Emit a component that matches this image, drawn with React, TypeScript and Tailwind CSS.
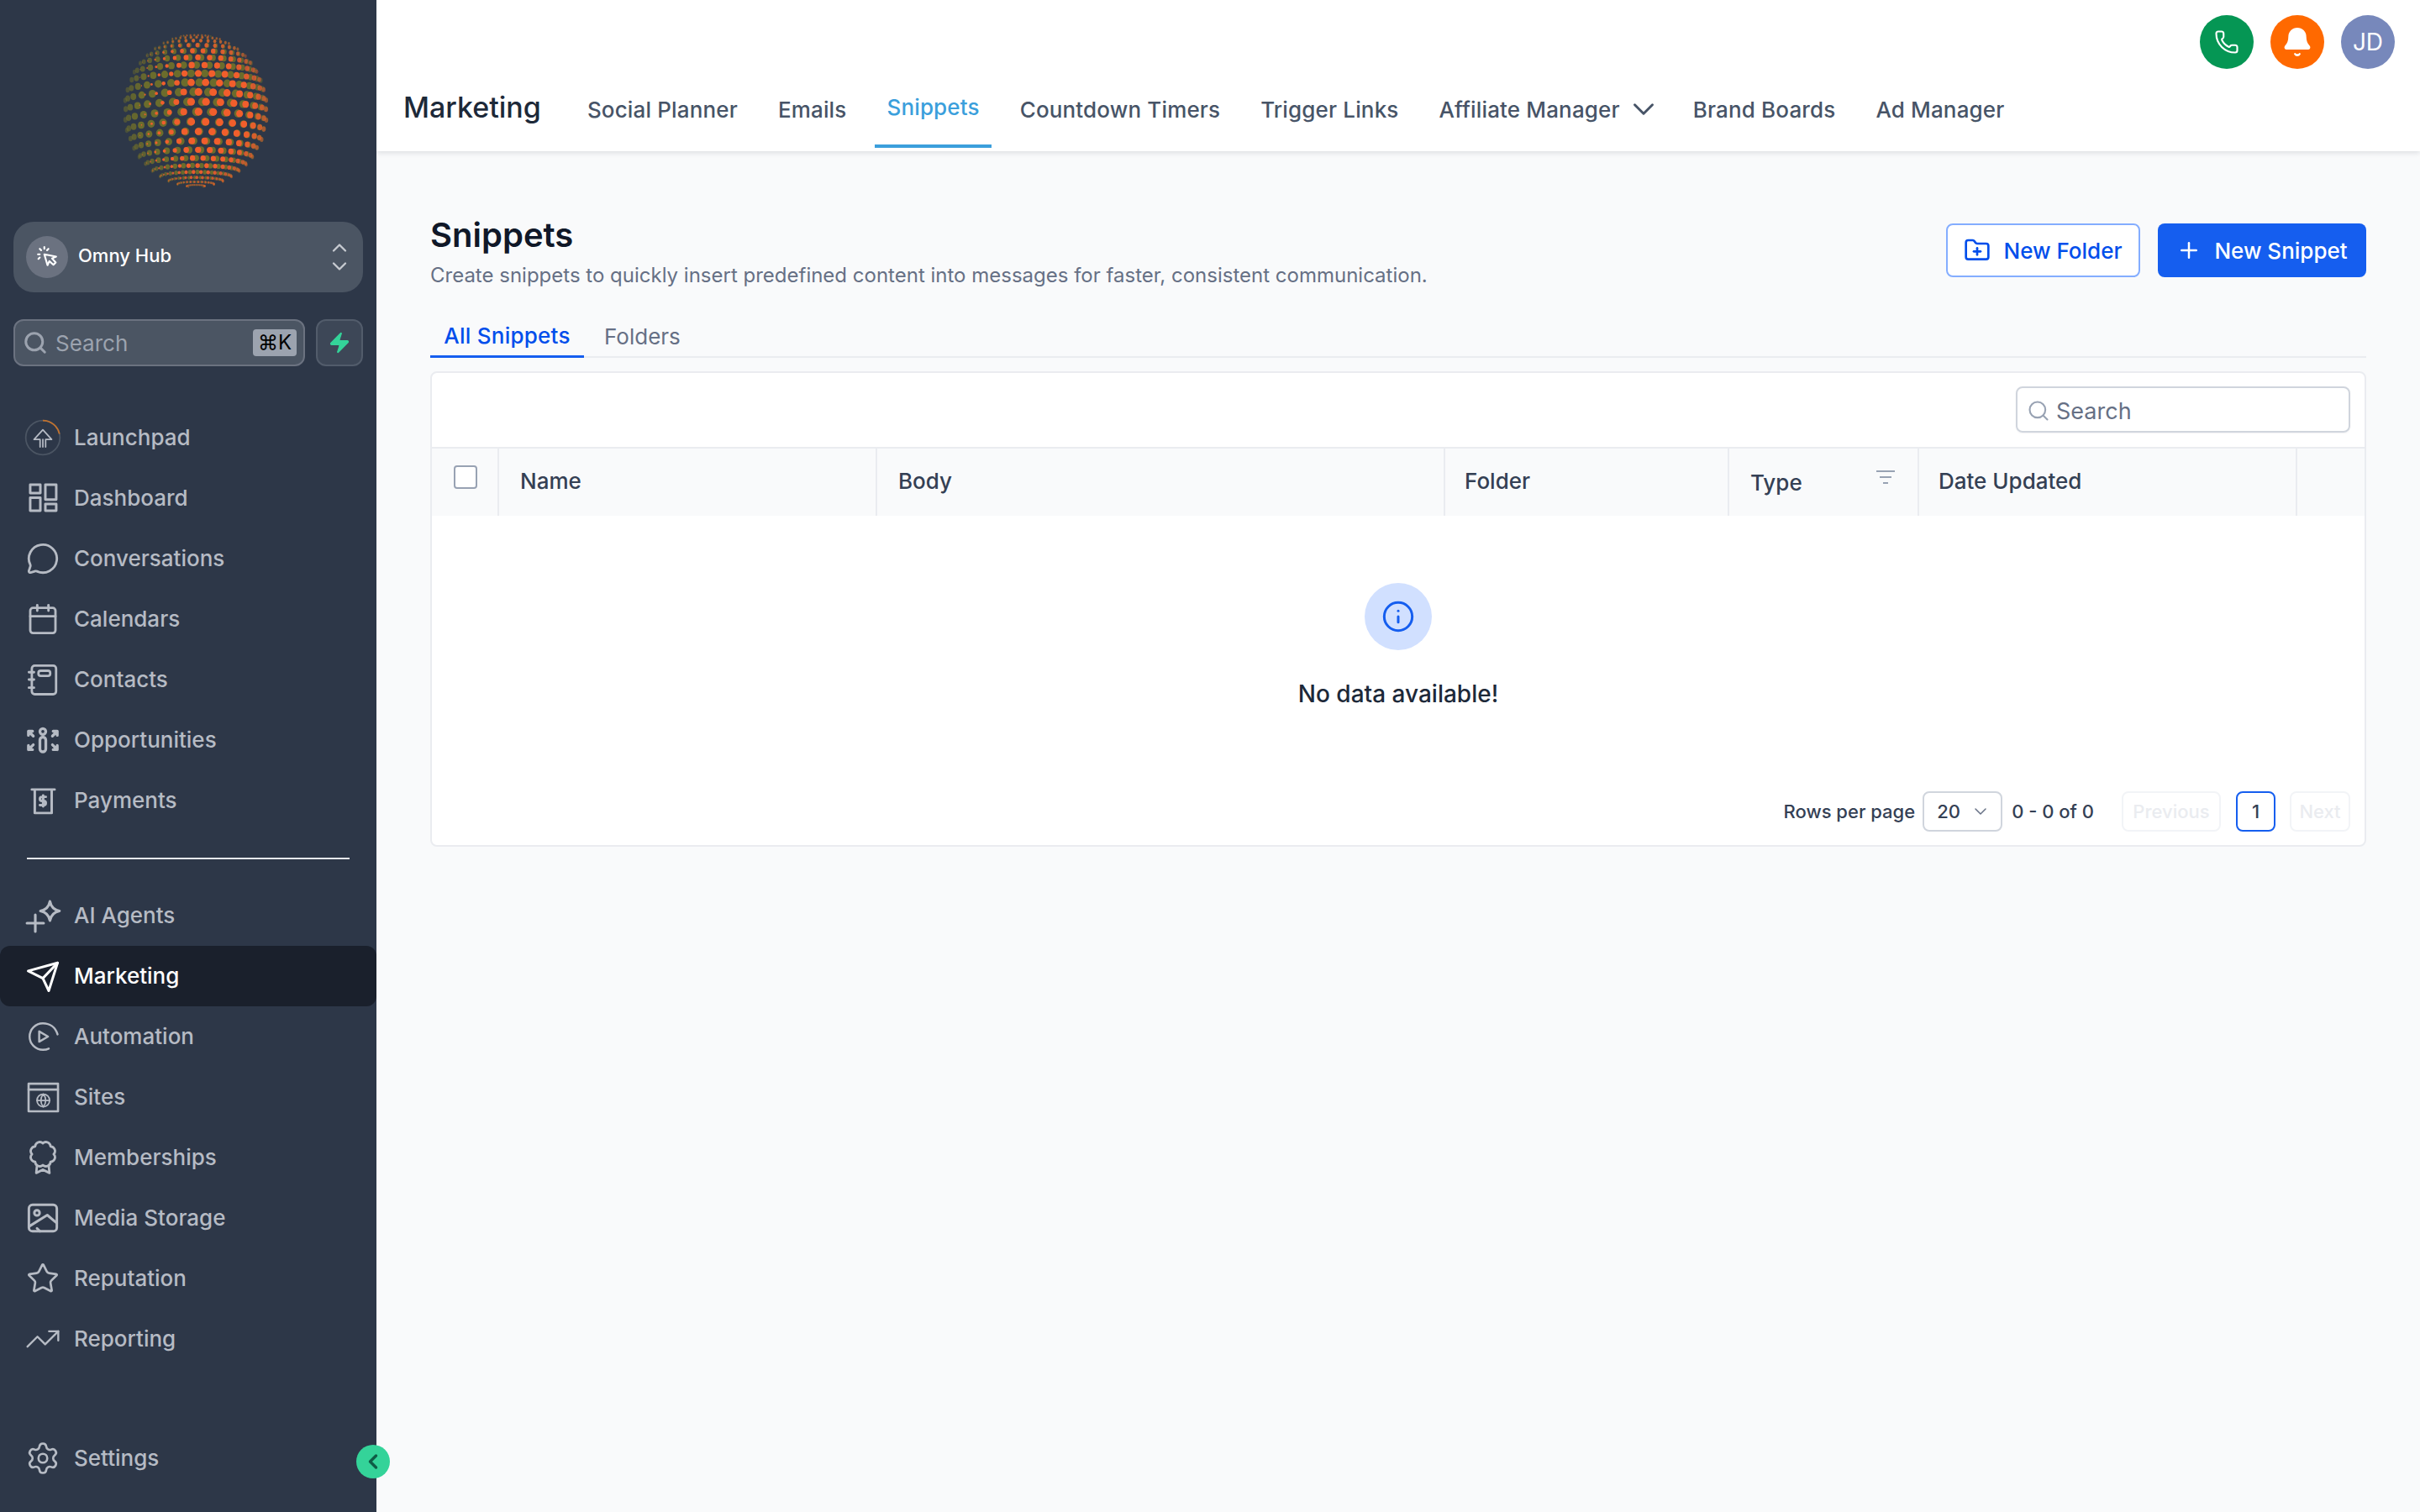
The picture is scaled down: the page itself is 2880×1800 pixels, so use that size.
import { Bell, Calendar, ChevronDown, ChevronLeft, ChevronUp, FolderPlus, Info, MessageCircle, Phone, Plus, Search, Settings, Star, TrendingUp, Zap } from "lucide-react";
import type { ReactNode } from "react";

const Ico = ({ children, sw = 1.6 }: { children: ReactNode; sw?: number }) => (
  <svg viewBox="0 0 24 24" fill="none" stroke="currentColor" strokeWidth={sw} strokeLinecap="round" strokeLinejoin="round" className="w-[42px] h-[42px] shrink-0">
    {children}
  </svg>
);

// dotted ball in the logo, two lattices laid over each other
const buildDots = (twist: number, shift: number, rows: number, cols: number) => {
  const out: { x: number; y: number; rx: number; ry: number; o: number }[] = [];
  const tilt = 0.12;
  for (let j = 1; j < rows; j++) {
    const lat = -Math.PI / 2 + (j / rows) * Math.PI;
    for (let i = 0; i < cols; i++) {
      const lon = (i / cols) * Math.PI * 2 + j * twist + shift;
      const px = Math.cos(lat) * Math.sin(lon);
      const py0 = Math.sin(lat);
      const pz0 = Math.cos(lat) * Math.cos(lon);
      const py = py0 * Math.cos(tilt) - pz0 * Math.sin(tilt);
      const pz = py0 * Math.sin(tilt) + pz0 * Math.cos(tilt);
      if (pz < 0.03) continue;
      const size = 0.25 + 0.75 * Math.cos(lat);
      out.push({ x: px * 85, y: py * 91, rx: 5.2 * size * (0.4 + 0.6 * pz), ry: 5.2 * size * (0.6 + 0.4 * pz), o: pz });
    }
  }
  return out;
};
const olive = buildDots(0.125, 0.06, 24, 30);
const orange = buildDots(0.105, 0.14, 24, 30);

const Ball = () => (
  <svg viewBox="-88 -94 176 188" className="w-[176px] h-[188px] block">
    {olive.map((d, i) => (
      <ellipse key={i} cx={d.x} cy={d.y} rx={d.rx} ry={d.ry} fill="#6b6c2c" opacity={Math.min(1, 0.4 + d.o)} />
    ))}
    {orange.map((d, i) => {
      // orange dots shrink towards the left of the ball
      const k = Math.max(0, Math.min(1, (d.x + 80) / 75));
      if (k < 0.15) return null;
      return <ellipse key={i} cx={d.x} cy={d.y} rx={d.rx * 0.9 * k} ry={d.ry * 0.9 * k} fill="#f15e2c" opacity={Math.min(1, 0.35 + d.o)} />;
    })}
  </svg>
);

// scalloped rosette for the memberships badge
const rosette = (() => {
  const n = 8;
  let d = "";
  for (let k = 0; k <= n; k++) {
    const a = (k / n) * Math.PI * 2 - Math.PI / 2;
    const x = (12 + 7.4 * Math.cos(a)).toFixed(2);
    const y = (9.7 + 7.4 * Math.sin(a)).toFixed(2);
    d += k === 0 ? `M${x} ${y}` : `A3.1 3.1 0 0 1 ${x} ${y}`;
  }
  return d;
})();

const nav1: { label: string; icon: ReactNode }[] = [
  {
    label: "Launchpad",
    icon: (
      <svg viewBox="0 0 40 40" fill="none" className="w-[44px] h-[44px] shrink-0">
        <circle cx="20" cy="20" r="18.5" stroke="#4b5563" strokeWidth="1.6" />
        <path d="M20 1.500A18.500 18.500 0 0 1 38 16" stroke="#c2722d" strokeWidth="1.6" />
        <path d="M17 30v-8h-6.500L20 11.500 29.500 22H23v8m-3-8v8" stroke="currentColor" strokeWidth="1.6" strokeLinejoin="round" strokeLinecap="round" />
      </svg>
    ),
  },
  {
    label: "Dashboard",
    icon: (
      <Ico sw={1.700}>
        <rect x="3.400" y="2.900" width="6.900" height="5.700" />
        <rect x="13.700" y="2.900" width="7.400" height="10.100" />
        <rect x="3.400" y="11.700" width="6.900" height="8.900" />
        <rect x="13.700" y="16" width="7.400" height="4.600" />
      </Ico>
    ),
  },
  { label: "Conversations", icon: <MessageCircle className="w-[40px] h-[40px] shrink-0" strokeWidth={1.700} /> },
  { label: "Calendars", icon: <Calendar className="w-[40px] h-[40px] shrink-0" strokeWidth={1.700} /> },
  {
    label: "Contacts",
    icon: (
      <Ico>
        <rect x="4.500" y="2.500" width="16.500" height="19.500" rx="2" />
        <rect x="9" y="6" width="8" height="3.500" rx="1.500" />
        <path d="M2.500 7H6M2.500 12H6M2.500 17.500H6" />
      </Ico>
    ),
  },
  {
    label: "Opportunities",
    icon: (
      <svg viewBox="0 0 24 24" fill="none" stroke="currentColor" strokeWidth="1.900" strokeLinecap="round" strokeLinejoin="round" className="w-[42px] h-[42px] shrink-0">
        <circle cx="12" cy="6.200" r="2" />
        <path d="M10 12a2 2 0 0 1 4 0v6a2 2 0 0 1-4 0z" />
        <path d="M2.200 6h2.800M2.200 6v2.800M2.200 6l3.300 3.300M21.800 6H19M21.800 6v2.800M21.800 6l-3.300 3.300M2.200 18.500H5M2.200 18.500v-2.800M2.200 18.500l3.300-3.300M21.800 18.500H19M21.800 18.500v-2.800M21.800 18.500l-3.300-3.300" />
      </svg>
    ),
  },
  {
    label: "Payments",
    icon: (
      <Ico sw={1.700}>
        <path d="M4.500 4.500H20M6.500 4.500v16H18v-16" />
        <path d="M14 9.500h-2.600a1.100 1.100 0 0 0 0 2.800h1.200a1.100 1.100 0 0 1 0 2.800H10M12.200 8.500V16" />
      </Ico>
    ),
  },
];

const nav2: { label: string; icon: ReactNode; active?: boolean }[] = [
  {
    label: "AI Agents",
    icon: (
      <svg viewBox="0 0 24 24" fill="none" stroke="currentColor" strokeWidth="1.700" strokeLinecap="round" strokeLinejoin="round" className="w-[44px] h-[44px] shrink-0">
        <path d="M16.600 2.800Q17.600 8 22.800 9 17.600 10 16.600 15.200 15.600 10 10.400 9 15.600 8 16.600 2.800z" />
        <path d="M7.100 11.500v10.800M1.700 16.900h10.800" />
      </svg>
    ),
  },
  {
    label: "Marketing",
    active: true,
    icon: (
      <Ico sw={1.700}>
        <path d="M2 8.500 22 3 16 22l-4-8.500z" />
        <path d="M22 3 12 13.500" />
      </Ico>
    ),
  },
  {
    label: "Automation",
    icon: (
      <Ico sw={1.4}>
        <path d="M22 10.500C20.500 5.500 16.500 3 12 3a9 9 0 0 0 0 18c1.500 0 3-.3 4-.8" />
        <path d="M9.500 8.500v7l6-3.500z" />
      </Ico>
    ),
  },
  {
    label: "Sites",
    icon: (
      <Ico sw={1.5}>
        <rect x="2.300" y="2.900" width="20" height="18.800" />
        <path d="M2.300 6.900h20" />
        <g strokeWidth="1">
          <circle cx="12.300" cy="14.300" r="4.300" />
          <path d="M8 14.300h8.600M12.300 10c-2.200 2.500-2.200 6.100 0 8.600 2.200-2.500 2.200-6.100 0-8.600z" />
        </g>
      </Ico>
    ),
  },
  {
    label: "Memberships",
    icon: (
      <Ico sw={1.6}>
        <path d={rosette} />
        <path d="M8 17.500 7.500 22.500 12 20.300 16.500 22.500 16 17.500" />
      </Ico>
    ),
  },
  {
    label: "Media Storage",
    icon: (
      <Ico sw={1.700}>
        <rect x="2.500" y="3" width="19" height="18" rx="2.500" />
        <circle cx="8" cy="8.500" r="1.800" />
        <path d="M3 17.500 15 10l6.500 5.500M10 21l-2-2" />
      </Ico>
    ),
  },
  { label: "Reputation", icon: <Star className="w-[40px] h-[40px] shrink-0" strokeWidth={1.600} /> },
  { label: "Reporting", icon: <TrendingUp className="w-[44px] h-[44px] shrink-0" strokeWidth={1.3} /> },
];

const NavRow = ({ label, icon, active }: { label: string; icon: ReactNode; active?: boolean }) => (
  <div className={`h-[72px] flex items-center rounded-xl ${active ? "bg-[#1a202c] text-white" : "text-[#b6bbc4]"}`}>
    <span className="w-[88px] pl-[28px] flex shrink-0">
      <span className="w-[46px] flex justify-center">{icon}</span>
    </span>
    <span className="text-[26px] font-medium leading-none">{label}</span>
  </div>
);

const tabs = ["Social Planner", "Emails", "Snippets", "Countdown Timers", "Trigger Links", "Affiliate Manager", "Brand Boards", "Ad Manager"];
const cols = [
  { label: "Name", cls: "pl-[25px] pb-[3px]" },
  { label: "Body", cls: "pl-[25px] pb-[3px]" },
  { label: "Folder", cls: "pl-[23px] pb-[3px]" },
  { label: "Type", cls: "pl-[25px]" },
  { label: "Date Updated", cls: "pl-[23px] pb-[3px]" },
];

export default function App() {
  return (
    <div className="w-[2880px] h-[1800px] overflow-hidden flex bg-[#f9fafb] font-['Inter',sans-serif]">
      {/* sidebar */}
      <aside className="relative w-[448px] h-full shrink-0 flex flex-col bg-[#2d3748]">
        <div className="pt-[38px] pl-[145px]">
          <Ball />
        </div>
        <div className="mx-[16px] mt-[38px] h-[84px] rounded-[24px] bg-[#4b5563] flex items-center pl-[15px] pr-[14px]">
          <span className="w-[50px] h-[50px] rounded-full bg-[#6b7280] flex items-center justify-center text-white">
            <svg viewBox="0 0 24 24" fill="none" stroke="currentColor" strokeWidth="2" strokeLinecap="round" strokeLinejoin="round" className="w-[26px] h-[26px]">
              <path d="M9 9l3.500 12 2-4.500 4.500 4 2.500-2.500-4-4.500 4.500-2z" />
              <path d="M2 9h2M4 3l1.500 1.500M9 1v2M13.500 3 12 4.500M2.500 14 4 12.500" />
            </svg>
          </span>
          <span className="ml-[12px] text-[22px] font-medium text-white flex-1 -mt-[3px]">Omny Hub</span>
          <span className="flex flex-col text-[#c7cbd1] -space-y-[6px]">
            <ChevronUp className="w-[28px] h-[28px]" strokeWidth={2} />
            <ChevronDown className="w-[28px] h-[28px]" strokeWidth={2} />
          </span>
        </div>
        <div className="mx-[16px] mt-[32px] flex gap-[13px]">
          <div className="w-[347px] h-[56px] rounded-[12px] bg-[#4b5563] border-2 border-[#6b7280] flex items-center pl-[9px] pr-[8px]">
            <Search className="w-[30px] h-[30px] text-[#9ca3af]" strokeWidth={2.400} />
            <span className="ml-[9px] text-[26px] text-[#9ca3af] flex-1">Search</span>
            <span className="w-[52px] h-[32px] rounded-[4px] bg-[#9ca3af] text-black text-[24px] flex items-center justify-center">⌘K</span>
          </div>
          <div className="w-[56px] h-[56px] rounded-[12px] bg-[#3d4757] border-2 border-[#525c6b] flex items-center justify-center">
            <Zap className="w-[28px] h-[28px] text-[#34d399] fill-[#34d399]" strokeWidth={1} />
          </div>
        </div>
        <nav className="mt-[49px]">
          {nav1.map((n) => (
            <NavRow key={n.label} label={n.label} icon={n.icon} />
          ))}
        </nav>
        <div className="mx-[32px] mt-[32px] h-[2px] bg-[#e5e7eb]" />
        <nav className="mt-[31px]">
          {nav2.map((n) => (
            <NavRow key={n.label} label={n.label} icon={n.icon} active={n.active} />
          ))}
        </nav>
        <div className="mt-auto pb-[28px]">
          <NavRow label="Settings" icon={<Settings className="w-[42px] h-[42px] shrink-0" strokeWidth={1.5} />} />
        </div>
        <button className="absolute left-[424px] top-[1720px] w-[40px] h-[40px] rounded-full bg-[#34d399] flex items-center justify-center text-[#0f5c46]">
          <ChevronLeft className="w-[28px] h-[28px]" strokeWidth={3} />
        </button>
      </aside>

      {/* main */}
      <div className="flex-1 min-w-0 flex flex-col">
        <header className="h-[180px] bg-white shadow-[0_2px_6px_rgba(16,24,40,0.12)] shrink-0">
          <div className="h-[82px] pt-[18px] pr-[30px] flex justify-end gap-[20px]">
            <span className="w-[64px] h-[64px] rounded-full bg-[#059654] flex items-center justify-center text-white">
              <Phone className="w-[30px] h-[30px]" strokeWidth={1.700} />
            </span>
            <span className="w-[64px] h-[64px] rounded-full bg-[#ff6900] flex items-center justify-center text-white">
              <Bell className="w-[38px] h-[38px] fill-white" strokeWidth={1.5} />
            </span>
            <span className="w-[64px] h-[64px] rounded-full bg-[#7788bb] flex items-center justify-center text-white text-[28px]">JD</span>
          </div>
          <div className="h-[94px] pl-[32px] flex items-stretch">
            <span className="flex items-center text-[34px] font-medium text-[#1d2939] mr-[41px] -mt-[4px]">Marketing</span>
            <div className="flex gap-[20px] tracking-[0.15px]">
              {tabs.map((t) =>
                t === "Snippets" ? (
                  <span key={t} className="px-[14px] flex items-center border-b-4 border-[#3b9fdc] text-[26px] font-medium text-[#3b9fdc]">
                    {t}
                  </span>
                ) : (
                  <span key={t} className="px-[14px] pt-[2px] flex items-center text-[26px] font-medium text-[#475467]">
                    {t}
                    {t === "Affiliate Manager" && <ChevronDown className="ml-[7px] -mr-[10px] w-[42px] h-[42px] shrink-0" strokeWidth={1.7} />}
                  </span>
                )
              )}
            </div>
          </div>
        </header>

        <main className="flex-1 px-[64px]">
          <div className="flex items-start justify-between pt-[76px]">
            <div>
              <h1 className="text-[40px] leading-[48px] font-semibold text-[#101828]">Snippets</h1>
              <p className="mt-[8px] text-[24px] leading-[32px] text-[#667085]">Create snippets to quickly insert predefined content into messages for faster, consistent communication.</p>
            </div>
            <div className="mt-[10px] flex gap-[21px]">
              <button className="w-[231px] h-[64px] rounded-[8px] bg-white border-2 border-[#84adff] flex items-center justify-center gap-[15px] text-[#004eeb] text-[26px] font-medium">
                <FolderPlus className="w-[32px] h-[32px]" strokeWidth={2} />
                New Folder
              </button>
              <button className="w-[248px] h-[64px] rounded-[8px] bg-[#155eef] flex items-center justify-center gap-[15px] text-white text-[26px] font-medium">
                <Plus className="w-[30px] h-[30px]" strokeWidth={2} />
                New Snippet
              </button>
            </div>
          </div>

          <div className="mt-[28px] h-[54px] flex border-b-2 border-[#eaecf0]">
            <span className="w-[183px] h-[54px] pt-[4px] flex items-center justify-center border-b-[3px] border-[#155eef] text-[26px] font-medium tracking-[0.25px] text-[#004eeb]">All Snippets</span>
            <span className="ml-[24px] pt-[2px] flex items-center text-[26px] text-[#667085] h-[54px]">Folders</span>
          </div>

          <section className="mt-[16px] h-[566px] rounded-[8px] border-2 border-[#eaecf0] bg-white flex flex-col">
            <div className="h-[88px] pt-[16px] pr-[17px] flex justify-end shrink-0">
              <div className="w-[398px] h-[55px] rounded-[8px] border-2 border-[#d0d5dd] flex items-center pl-[11px] pt-[5px] shadow-[0_1px_2px_rgba(16,24,40,0.05)]">
                <Search className="w-[28px] h-[28px] text-[#98a2b3] -mt-[3px]" strokeWidth={1.8} />
                <span className="ml-[7px] text-[27px] text-[#667085]">Search</span>
              </div>
            </div>
            <div className="h-[82px] shrink-0 border-t-2 border-[#eaecf0] bg-[#f9fafb] grid grid-cols-[80px_450px_676px_338px_226px_450px_1fr]">
              <div className="border-r-2 border-[#eaecf0] pl-[26px] pt-[20px]">
                <span className="block w-[28px] h-[28px] rounded-[4px] bg-white border-2 border-[#98a2b3]" />
              </div>
              {cols.map((c) => (
                <div key={c.label} className={`relative border-r-2 border-[#eaecf0] flex items-center text-[26px] font-medium text-[#344054] ${c.cls}`}>
                  {c.label}
                  {c.label === "Type" && (
                    <svg viewBox="0 0 24 18" className="absolute right-[26px] top-[25px] w-[24px] h-[18px]" fill="none" stroke="#98a2b3" strokeWidth="2.200">
                      <path d="M1 2h22M5 9h14M9 16h6" />
                    </svg>
                  )}
                </div>
              ))}
              <div />
            </div>
            <div className="flex-1 flex flex-col items-center pt-[80px]">
              <span className="w-[80px] h-[80px] rounded-full bg-[#d1e0ff] flex items-center justify-center text-[#155eef]">
                <Info className="w-[40px] h-[40px]" strokeWidth={1.8} />
              </span>
              <p className="mt-[34px] text-[28px] leading-[36px] font-medium text-[#1d2939]">No data available!</p>
              <div className="mt-auto mb-[16px] self-end pr-[17px] flex items-center text-[22px] font-medium text-[#344054]">
                <span>Rows per page</span>
                <span className="ml-[9px] w-[95px] h-[48px] rounded-[8px] border-2 border-[#d0d5dd] flex items-center pl-[15px] gap-[12px] text-[#344054]">
                  20
                  <ChevronDown className="w-[24px] h-[24px] text-[#667085]" strokeWidth={1.5} />
                </span>
                <span className="ml-[11px]">0 - 0 of 0</span>
                <span className="ml-[33px] w-[118px] h-[48px] rounded-[8px] border-2 border-[#f2f4f7] flex items-center justify-center text-[#eaecf0]">Previous</span>
                <span className="ml-[18px] w-[47px] h-[48px] rounded-[8px] border-2 border-[#155eef] flex items-center justify-center">1</span>
                <span className="ml-[17px] w-[72px] h-[48px] rounded-[8px] border-2 border-[#f2f4f7] flex items-center justify-center text-[#eaecf0]">Next</span>
              </div>
            </div>
          </section>
        </main>
      </div>
    </div>
  );
}
